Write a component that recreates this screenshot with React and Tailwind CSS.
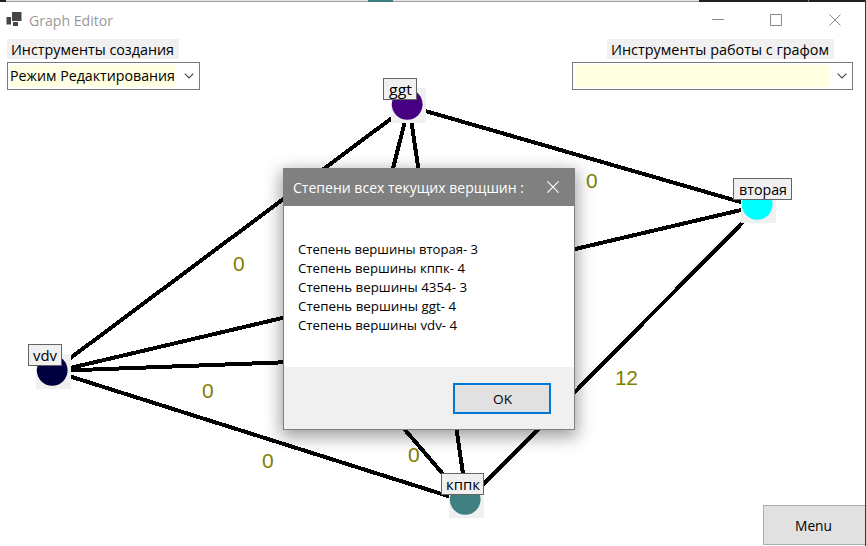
const SANS = "font-['Open_Sans','Noto_Sans',sans-serif]";

const EDGES = [
  [408, 106, 53, 371],
  [408, 106, 758, 207],
  [409, 105, 345, 360],
  [409, 105, 467, 501],
  [53, 372, 758, 206],
  [53, 371, 345, 360],
  [53, 371, 467, 502],
  [345, 360, 467, 502],
  [466, 502, 758, 207],
];

const NODES = [
  { label: "ggt", x: 391, y: 88, color: "#480082", pos: "left-[383px] top-[78px] w-[34px]", text: 23 },
  { label: "вторая", x: 741, y: 188, color: "#00ffff", pos: "left-[733px] top-[178px] w-[59px]", text: 48 },
  { label: "vdv", x: 36, y: 354, color: "#000040", pos: "left-[28px] top-[344px] w-[34px]", text: 24 },
  { label: "кппк", x: 449, y: 483, color: "#408080", pos: "left-[441px] top-[473px] w-[43px]", text: 34 },
];

const WEIGHTS = [
  { value: "0", pos: "left-[233px] top-[252px]" },
  { value: "0", pos: "left-[586px] top-[169px]" },
  { value: "0", pos: "left-[202px] top-[379px]" },
  { value: "0", pos: "left-[262px] top-[449px]" },
  { value: "0", pos: "left-[408px] top-[443px]" },
  { value: "12", pos: "left-[615px] top-[366px]" },
];

const DEGREES = [
  { text: "Степень вершины вторая- 3", width: 180 },
  { text: "Степень вершины кппк- 4", width: 167 },
  { text: "Степень вершины 4354- 3", width: 169 },
  { text: "Степень вершины ggt- 4", width: 158 },
  { text: "Степень вершины vdv- 4", width: 159 },
];

// One line of real text fitted to a measured width.
function Label({ children, width, size = 14, color = "#000", y = 15 }) {
  return (
    <svg width={width} height="20" className="block shrink-0 overflow-visible">
      <text x="0" y={y} fontSize={size} fill={color} textLength={width} lengthAdjust="spacingAndGlyphs">
        {children}
      </text>
    </svg>
  );
}

function Chevron() {
  return (
    <svg width="10" height="6" className="shrink-0" fill="none" stroke="#444" strokeWidth="1.1">
      <path d="M.7.7 5 5 9.3.7" />
    </svg>
  );
}

function Graph() {
  return (
    <div className="absolute inset-0">
      <svg width="866" height="546" className="block">
        <g stroke="#000" strokeWidth="4" shapeRendering="crispEdges">
          {EDGES.map(([x1, y1, x2, y2], i) => (
            <line key={i} x1={x1} y1={y1} x2={x2} y2={y2} />
          ))}
        </g>
        {NODES.map((n) => (
          <g key={n.label}>
            <rect x={n.x} y={n.y} width="35" height="35" fill="#f0f0f0" />
            <circle cx={n.x + 16.2} cy={n.y + 16.3} r="15.4" fill={n.color} />
          </g>
        ))}
      </svg>
      {NODES.map((n) => (
        <div key={n.label} className={`absolute flex h-[22px] items-center justify-center border border-[#646464] bg-[#f0f0f0] ${n.pos}`}>
          <Label width={n.text} y={16}>{n.label}</Label>
        </div>
      ))}
      {WEIGHTS.map((w) => (
        <span key={w.pos} className={`absolute font-['Liberation_Sans',sans-serif] text-[21px] leading-6 tracking-[-0.5px] text-[#808000] ${w.pos}`}>
          {w.value}
        </span>
      ))}
    </div>
  );
}

function MessageBox() {
  return (
    <div className="absolute left-[283px] top-[168px] flex h-[262px] w-[292px] flex-col border border-[#808080] bg-white shadow-[0_5px_16px_2px_rgba(0,0,0,0.38)]">
      <div className="flex h-[37px] shrink-0 items-center justify-between bg-[#808080] pl-[9px] pr-[15px]">
        <Label width={231} color="#fff">Степени всех текущих верщшин :</Label>
        <svg width="12" height="12" className="mb-px" stroke="#fff" strokeWidth="1.1">
          <path d="M.3.3 11.7 11.7M11.7.3.3 11.7" />
        </svg>
      </div>
      <div className="flex flex-1 flex-col pl-[14px] pt-[33px]">
        {DEGREES.map((d) => (
          <div key={d.text} className="h-[19px]">
            <Label width={d.width} size={13}>{d.text}</Label>
          </div>
        ))}
      </div>
      <div className="flex h-[62px] shrink-0 justify-end bg-[#f0f0f0] pr-[23px] pt-4">
        <button className="flex h-[31px] w-[98px] items-center justify-center border-2 border-[#0078d7] bg-[#e1e1e1]">
          <Label width={19} size={13}>OK</Label>
        </button>
      </div>
    </div>
  );
}

export default function App() {
  return (
    <div className={`relative flex h-[546px] w-[866px] flex-col overflow-hidden border-r border-[#383838] bg-white ${SANS}`}>
      <div className="flex h-[2px] shrink-0 border-b border-[#a0a0a0] bg-[#e4e4e4]">
        <div className="h-[2px] w-[6px] bg-[#202020]" />
        <div className="ml-[362px] h-[2px] w-[25px] bg-[#3e7c7c]" />
        <div className="ml-auto h-[2px] w-[109px] bg-[#202020]" />
        <div className="h-[2px] w-px bg-[#777]" />
        <div className="h-[2px] w-[56px] bg-[#202020]" />
      </div>
      <Graph />
      <header className="relative flex h-[37px] shrink-0 items-center pl-[6px] pr-[23px]">
        <svg width="16" height="15" className="mb-[3px] shrink-0" fill="#454545">
          <path d="M6 0h9.5v9H6zM.5 5H5v7.5H.5zM7 10h5v4H7z" />
        </svg>
        <div className="ml-[7px]"><Label width={84} color="#999">Graph Editor</Label></div>
        <svg width="130" height="12" className="mb-px ml-auto" fill="none" stroke="#888">
          <path d="M0 5.5h12M58.5.5h11v11h-11z" />
          <path d="M117.5.5l11 11m0-11l-11 11" />
        </svg>
      </header>
      <div className="relative flex justify-between pl-[7px] pr-3">
        <div>
          <div className="flex h-[20px] w-[172px] items-center bg-[#f0f0f0] pl-[4px]">
            <Label width={163} y={16}>Инструменты создания</Label>
          </div>
          <div className="mt-[3px] flex h-[28px] w-[193px] items-center justify-between border border-[#7a7a7a] bg-white pl-[2px] pr-[5px]">
            <div className="flex h-[22px] w-[166px] items-center bg-[#ffffe1]">
              <Label width={165}>Режим Редактирования</Label>
            </div>
            <Chevron />
          </div>
        </div>
        <div className="flex flex-col">
          <div className="ml-[35px] flex h-[20px] w-[227px] items-center bg-[#f0f0f0] pl-[4px]">
            <Label width={218} y={16}>Инструменты работы с графом</Label>
          </div>
          <div className="mt-[3px] flex h-[28px] w-[281px] items-center justify-between border border-[#7a7a7a] bg-white pl-[2px] pr-[5px]">
            <div className="h-[22px] w-[254px] bg-[#ffffe1]" />
            <Chevron />
          </div>
        </div>
      </div>
      <button className="relative ml-auto mt-auto mb-[1px] flex h-[40px] w-[102px] items-center justify-center border border-r-0 border-[#adadad] bg-[#e1e1e1] pr-[2px]">
        <Label width={37} y={16}>Menu</Label>
      </button>
      <MessageBox />
    </div>
  );
}
